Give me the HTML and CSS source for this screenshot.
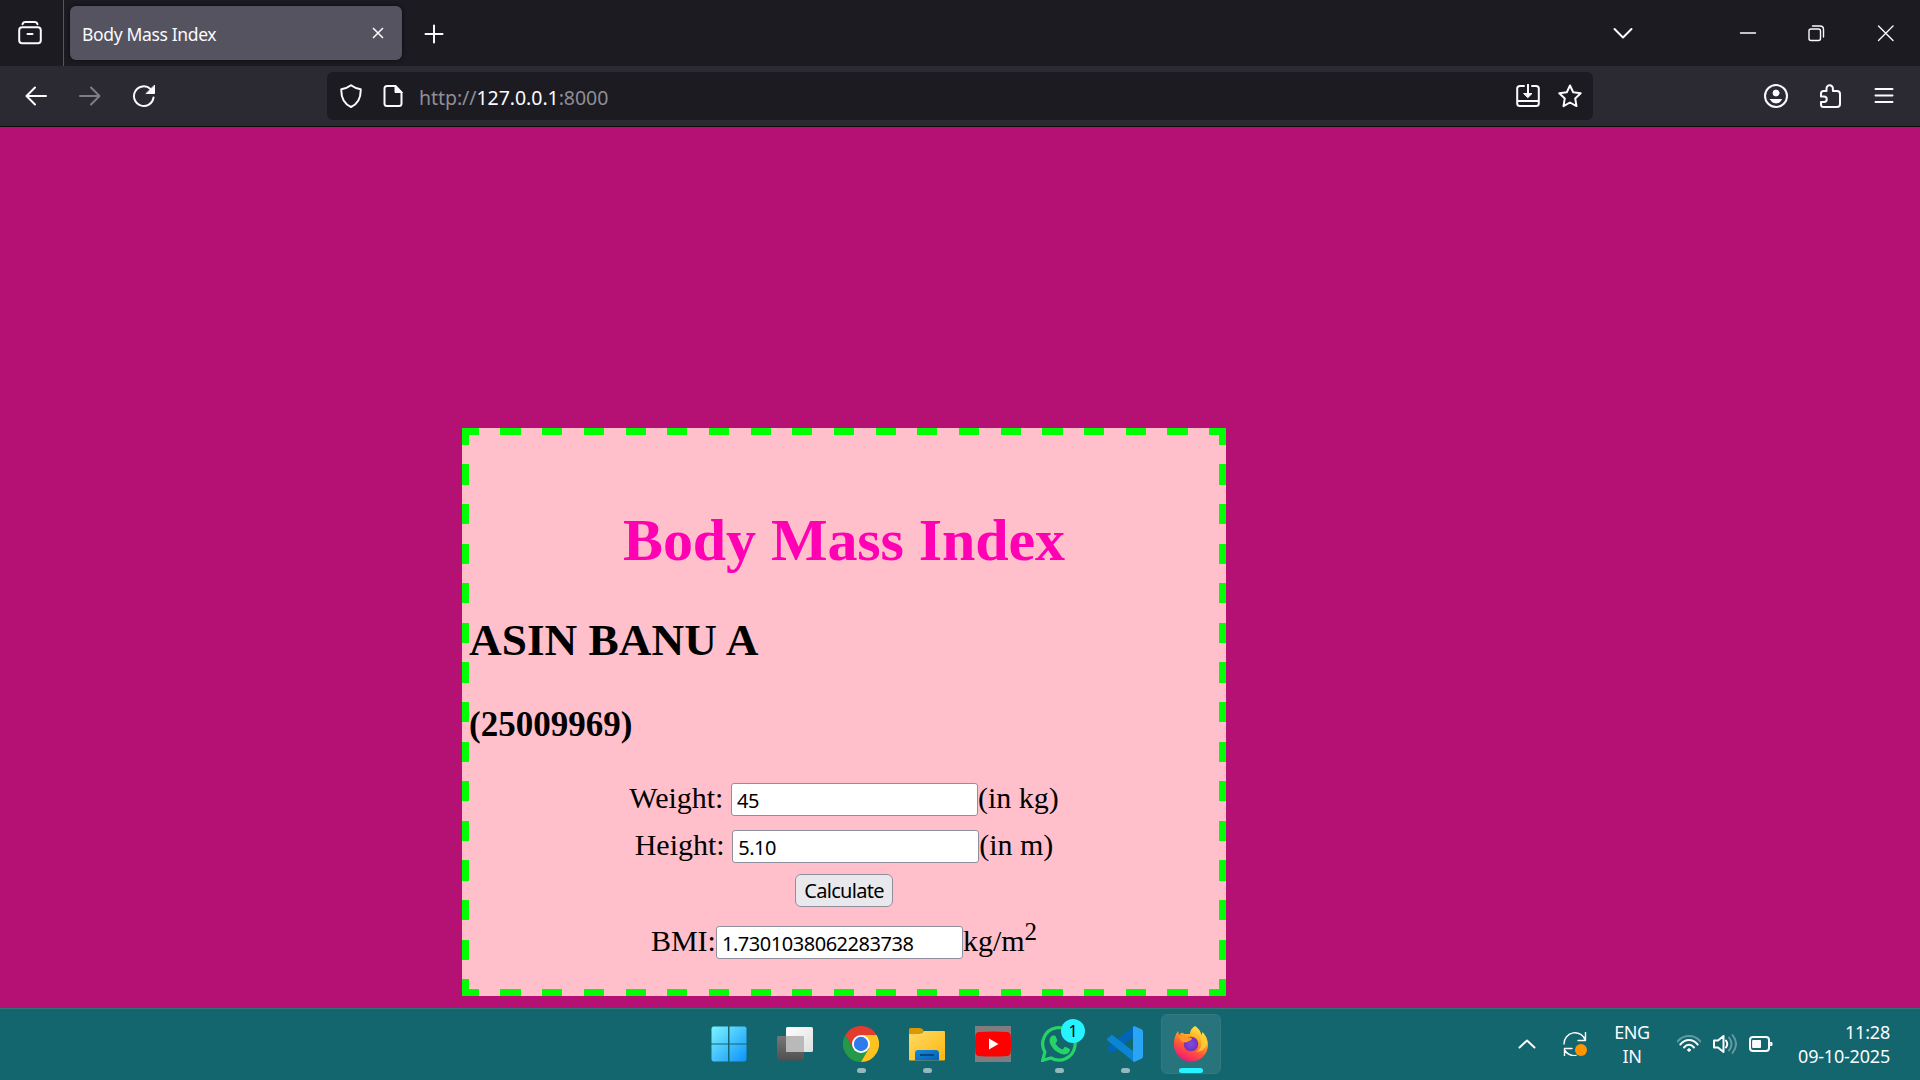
FILE: index.html
```html
<!DOCTYPE html>
<html lang="en">
<head>
<meta charset="utf-8">
<title>Body Mass Index</title>
<link rel="stylesheet" href="styles.css">
</head>
<body>
<header class="tabbar">
  <div class="tabview"><svg class="icon" viewBox="0 0 24 24"><rect x="1.2" y="6.2" width="21.6" height="16" rx="3"/><path d="M4.5 3.2Q5 1 7.5 1h9Q19 1 19.5 3.2"/><path d="M9.5 13h5"/></svg></div>
  <div class="tab"><span class="tab-title">Body Mass Index</span><svg class="tab-close" viewBox="0 0 12 12"><path d="M1 1l10 10M11 1L1 11"/></svg></div>
  <svg class="icon plus" viewBox="0 0 24 24"><path d="M12 3.500v17M3.500 12h17"/></svg>
  <div class="window-controls">
    <svg class="icon chevron" viewBox="0 0 24 24"><path d="M3.500 8l8.500 8.500L20.500 8"/></svg>
    <svg class="icon minimize thin" viewBox="0 0 24 24"><path d="M4.500 12h15"/></svg>
    <svg class="icon restore thin" viewBox="0 0 24 24"><rect x="5" y="8" width="11.500" height="11.500" rx="2"/><path d="M8.500 5H16q3.500 0 3.500 3.500V16"/></svg>
    <svg class="icon close thin" viewBox="0 0 24 24"><path d="M4.500 5l14.500 14.500M19 5L4.500 19.500"/></svg>
  </div>
</header>
<nav class="toolbar">
  <div class="nav-buttons">
    <svg class="icon" viewBox="0 0 24 24"><path d="M22 12H3M11 3.500L2.500 12l8.500 8.500"/></svg>
    <svg class="icon disabled" viewBox="0 0 24 24"><path d="M2 12h19M13 3.500l8.500 8.500-8.500 8.500"/></svg>
    <svg class="icon" viewBox="0 0 24 24"><path d="M21.500 13.500A9.800 9.800 0 1 1 18.500 5"/><path class="solid" d="M22.500 1.500v8h-8z"/></svg>
  </div>
  <div class="urlbar">
    <svg class="icon" viewBox="0 0 24 24"><path d="M12 1.200c3 2.300 6 3.400 9.700 4C22 14 19 20 12 23 5 20 2 14 2.300 5.200 6 4.600 9 3.500 12 1.200z"/></svg>
    <svg class="icon file" viewBox="0 0 24 24"><path d="M14.500 2H6Q3.500 2 3.500 4.500v15Q3.500 22 6 22h12q2.500 0 2.500-2.500V8.500z"/><path class="solid" d="M14 1.500v7h7z"/></svg>
    <span class="url">http://<b>127.0.0.1</b>:8000</span>
    <svg class="icon install" viewBox="0 0 24 24"><path d="M8 2H4Q1.200 2 1.200 4.500v15Q1.200 22 4 22h16q2.800 0 2.800-2.500v-15Q22.800 2 20 2h-4M1.200 17h21.600M12 0v12"/><path class="solid" d="M8 9.500h8l-4 4z"/></svg>
    <svg class="icon" viewBox="0 0 24 24"><path d="M12 1.500l3.200 6.700 7.500 1-5.500 5.200 1.300 7.700L12 18.500 5.500 22.100l1.300-7.700L1.300 9.200l7.500-1z"/></svg>
  </div>
  <div class="toolbar-actions">
    <svg class="icon" viewBox="0 0 24 24"><circle cx="12" cy="12" r="11"/><circle class="solid" cx="12" cy="9" r="3"/><path class="solid" d="M6.500 15.500h11Q16 19 12 19t-5.500-3.500z"/></svg>
    <svg class="icon" viewBox="0 0 24 24"><path d="M8.500 7V4.500a3.200 3.200 0 0 1 6.400 0V7H19q3 0 3 3v10q0 3-3 3H5.500Q3 23 3 20.500V18h3a2.700 2.700 0 0 0 0-5.500H3V9.500Q3 7 5.500 7z"/></svg>
    <svg class="icon" viewBox="0 0 24 24"><path d="M3.500 5h17M3.500 11.500h17M3.500 18h17"/></svg>
  </div>
</nav>
<main class="page">
  <form class="card">
    <h1>Body Mass Index</h1>
    <h2>ASIN BANU A</h2>
    <h3>(25009969)</h3>
    <div class="row weight"><span>Weight:&nbsp;</span><input type="text" value="45"><span>(in kg)</span></div>
    <div class="row height"><span>Height:&nbsp;</span><input type="text" value="5.10"><span>(in m)</span></div>
    <button type="button">Calculate</button>
    <div class="row bmi"><span>BMI:</span><input type="text" value="1.7301038062283738"><span>kg/m<sup>2</sup></span></div>
  </form>
</main>
<footer class="taskbar">
  <div class="apps">
    <div class="app start"><svg viewBox="0 0 36 36"><defs><linearGradient id="win" x1="0" y1="0" x2="36" y2="36" gradientUnits="userSpaceOnUse"><stop stop-color="#7df5ff"/><stop offset="1" stop-color="#0c91fb"/></linearGradient></defs><path fill="url(#win)" d="M2 .5h15v17H.5V2zM18.500.5H34L35.500 2v15.500h-17zM.5 18.500H17v17H2L.5 34zM18.500 18.500h17V34L34 35.500H18.500z"/></svg></div>
    <div class="app"><svg viewBox="0 0 36 36"><defs><linearGradient id="tvd" x1="0" y1="0" x2="0" y2="1"><stop stop-color="#777"/><stop offset="1" stop-color="#505050"/></linearGradient><linearGradient id="tvl" x1="0" y1="0" x2="1" y2="1"><stop stop-color="#fff"/><stop offset="1" stop-color="#dedede"/></linearGradient></defs><rect y="10" width="27" height="24.500" rx="1.500" fill="url(#tvd)"/><rect x="9" y="1" width="27" height="25" rx="1.500" fill="url(#tvl)"/><path d="M9 10h17q1 0 1 1v15H10q-1 0-1-1z" fill="#b9b9b9"/></svg></div>
    <div class="app"><svg viewBox="0 0 36 36"><path fill="#e33b2e" d="M2.400 9A18 18 0 0 1 33.600 9H18L10.200 22.500z"/><path fill="#249a48" d="M2.400 9A18 18 0 0 0 18 36l7.800-13.500H10.200z"/><path fill="#fcc31e" d="M33.600 9A18 18 0 0 1 18 36l7.800-13.500L18 9z"/><circle cx="18" cy="18" r="9" fill="#fff"/><circle cx="18" cy="18" r="7.200" fill="#2f7bec"/></svg><i class="running"></i></div>
    <div class="app"><svg viewBox="0 0 36 36"><defs><linearGradient id="fold" x1="0" y1="0" x2="1" y2="1"><stop stop-color="#ffda66"/><stop offset="1" stop-color="#fdb70e"/></linearGradient><linearGradient id="fblue" x1="0" y1="0" x2="1" y2="1"><stop stop-color="#168ad9"/><stop offset="1" stop-color="#0560b4"/></linearGradient></defs><path fill="#dc9800" d="M0 3.500Q0 2 1.500 2H11q2 0 4 3l-3 3H0z"/><path fill="url(#fold)" d="M0 8h11q2 0 4-3h20q1 0 1 1v27.500q0 1-1 1H1q-1 0-1-1z"/><path fill="url(#fblue)" d="M6 34.500V27q0-3 3-3h18q3 0 3 3v7.500z"/><path d="M11 29h14" stroke="#064681" stroke-width="2"/></svg><i class="running"></i></div>
    <div class="app"><svg viewBox="0 0 36 36"><path fill="#837b7d" d="M0 0h36v36H0z"/><path fill="red" d="M4 6q14-1 28 0 3.500.3 3.700 4 .6 8 0 16-.2 3.700-3.700 4-14 1-28 0-3.500-.3-3.700-4-.6-8 0-16Q.5 6.300 4 6z"/><path fill="#fff" d="M14 12.500v11l9.500-5.500z"/></svg></div>
    <div class="app"><svg viewBox="0 0 36 36"><path d="M1.700 34.300l2.200-8.300A16.200 16.200 0 1 1 10 32z" fill="none" stroke="#25d366" stroke-width="3.200"/><path fill="#25d366" d="M11.500 9.500h2q.8 0 1.200 1l1.500 3.600q.3.800-.3 1.500l-1.500 1.900q2.400 4.400 7 6.200l2-2.400q.6-.7 1.400-.3l3.600 1.800q.8.400.6 1.300-.9 4.600-6.500 4.300C15 27.500 8.700 20 8.500 14.500q0-3.500 3-5z"/></svg><i class="running"></i><span class="badge">1</span></div>
    <div class="app"><svg viewBox="0 0 36 36"><path fill="#0066b8" d="M27 0v10.500L5 27.300 1 24q-2-1.500 0-3.200z"/><path fill="#0b84d2" d="M5 8.700l22 17V36L1 15q-2-1.500 0-3.200z"/><path fill="#29a5f3" d="M27 0l7.500 3.300Q36 4 36 5.500v25q0 1.500-1.500 2.200L27 36l-1-1V1z"/></svg><i class="running"></i></div>
    <div class="app active"><svg viewBox="0 0 36 36"><defs><linearGradient id="ff" x1=".8" y1="0" x2=".3" y2="1"><stop stop-color="#fff44f"/><stop offset=".35" stop-color="#ffae24"/><stop offset=".65" stop-color="#ff5639"/><stop offset="1" stop-color="#f0147b"/></linearGradient><radialGradient id="globe"><stop stop-color="#7b4ee8"/><stop offset="1" stop-color="#7430b5"/></radialGradient></defs><path fill="url(#ff)" d="M22 0q5 3 6.500 9l1-3Q35 12 35 19a17 16.500 0 0 1-34 0Q.500 11 5 5l1 4 2-2q2-1 3 1h6q0-5 5-8z"/><circle cx="18" cy="18" r="7.300" fill="url(#globe)"/><path fill="#ff9826" d="M5 11q5-3 9 0l5 1q0 2-4 3.500-3 2-6 0z"/><path fill="#ffd23b" d="M21 1q6 4 7 12 2 9-5 13 9-1 11-8 1-6-4-11l-1 4q-2-7-8-10z" opacity=".75"/></svg><i class="running"></i></div>
  </div>
  <div class="tray">
    <svg class="icon tray-chevron" viewBox="0 0 24 24"><path d="M4.500 15.500l7.500-7 7.500 7"/></svg>
    <svg class="icon sync thin" viewBox="0 0 24 24"><path d="M1 12A11 11 0 0 1 22.500 8.500M22.500 0v8.500H15M13 23.500Q6 24.500 1.500 18M1.500 24v-7.500H9"/><circle cx="18" cy="18" r="6" fill="#ff9500" stroke="none"/></svg>
    <div class="lang"><span>ENG</span><span>IN</span></div>
    <svg class="icon wifi" viewBox="0 0 24 24"><path class="faint" d="M.5 9.500Q5 4 12 4t11.500 5.500"/><path d="M3.300 12.500Q7 8 12 8t8.700 4.500M7 15.500q2.200-2.700 5-2.700t5 2.700"/><circle class="solid" cx="12" cy="18" r="1.300"/></svg>
    <svg class="icon sound" viewBox="0 0 24 24"><path d="M1 8.500h4L10.500 4v16L5 15.500H1zM13 8.500q2.500 3.500 0 7"/><path class="faint" d="M16 5.500q5 6.500 0 13M19.500 3q7 9 0 18"/></svg>
    <svg class="icon battery" viewBox="0 0 24 24"><rect x="1" y="5" width="19" height="14" rx="3"/><path class="solid" d="M4 8.500h7.500v7H4zM21.500 10.500h1.500v3h-1.500z"/></svg>
    <div class="clock"><span>11:28</span><span>09-10-2025</span></div>
  </div>
</footer>
</body>
</html>
```
FILE: styles.css
```css
* { box-sizing: border-box; }
body {
  margin: 0;
  width: 1920px;
  height: 1080px;
  overflow: hidden;
  display: flex;
  flex-direction: column;
  font-family: "Noto Sans", "Open Sans", sans-serif;
  color: #fbfbfe;
}
svg { display: block; flex: none; }
.icon {
  width: 24px;
  height: 24px;
  fill: none;
  stroke: #fbfbfe;
  stroke-width: 2;
  stroke-linecap: round;
  stroke-linejoin: round;
}
.thin { stroke-width: 1.4; }
.solid { fill: #fbfbfe; stroke-width: 1; }
.faint { opacity: .35; }
.disabled { opacity: .4; }

.tabbar {
  height: 66px;
  flex: none;
  display: flex;
  align-items: center;
  background: #1c1b22;
}
.tabview {
  width: 64px;
  height: 66px;
  padding: 21px 0 0 18px;
  border-right: 1px solid #55535e;
}
.tab {
  width: 332px;
  height: 54px;
  margin-left: 6px;
  padding: 0 18px 0 12px;
  display: flex;
  align-items: center;
  justify-content: space-between;
  border-radius: 6px;
  background: #55535f;
  box-shadow: 0 0 4px #0c0c10;
}
.tab-title { padding-top: 1px; font-size: 17.500px; letter-spacing: -.35px; }
.tab-close { width: 12px; height: 12px; stroke: #fbfbfe; stroke-width: 1.500; }
.plus { margin: 2px 0 0 20px; }
.window-controls { margin-left: auto; padding-right: 22px; display: flex; }
.minimize { margin-left: 101px; }
.restore { margin-left: 44px; }
.close { margin-left: 46px; }

.toolbar {
  height: 61px;
  flex: none;
  display: flex;
  align-items: center;
  padding: 0 24px;
  background: #2b2a33;
  border-bottom: 1px solid #0c0c0d;
}
.nav-buttons { width: 303px; display: flex; gap: 30px; }
.urlbar {
  width: 1266px;
  height: 48px;
  padding: 0 11px 0 12px;
  display: flex;
  align-items: center;
  border-radius: 6px;
  background: #1c1b22;
}
.file { margin-left: 18px; }
.url { margin-left: 14px; padding-top: 2px; font-size: 19.500px; letter-spacing: -.05px; color: #8f8e95; }
.url b { font-weight: 400; color: #fbfbfe; }
.install { margin: 0 18px 0 auto; }
.toolbar-actions { margin-left: auto; display: flex; gap: 30px; }

.page { height: 881px; flex: none; padding: 301px 0 0 462px; background: #b51074; }
.card {
  width: 764px;
  height: 568px;
  padding: 7px;
  display: flex;
  flex-direction: column;
  align-items: center;
  color: #000;
  font-family: "Liberation Serif", serif;
  font-size: 30px;
  background:
    repeating-linear-gradient(90deg, #0f0 -3.200px 17px, pink 17px 38.480px) top / 100% 7px no-repeat,
    repeating-linear-gradient(90deg, #0f0 -3.200px 17px, pink 17px 38.480px) bottom / 100% 7px no-repeat,
    repeating-linear-gradient(#0f0 -3.200px 17px, pink 17px 36.400px) left / 7px 100% no-repeat,
    repeating-linear-gradient(#0f0 -3.200px 17px, pink 17px 36.400px) right / 7px 100% no-repeat,
    pink;
}
h1, h2, h3 { margin: 0; white-space: nowrap; }
h1 { margin-top: 70px; font-size: 60px; line-height: 70px; letter-spacing: -.1px; color: #ff00b3; }
h2 { align-self: flex-start; margin-top: 37px; font-size: 45.300px; line-height: 56px; }
h3 { align-self: flex-start; margin-top: 36px; font-size: 35px; line-height: 42px; }
.row { height: 33px; display: flex; align-items: center; white-space: nowrap; line-height: 33px; }
.row span { height: 37px; }
.weight { margin-top: 37px; }
.height { margin-top: 14px; }
.bmi { margin-top: 19px; }
input {
  width: 247px;
  height: 33px;
  margin: 0;
  padding: 2px 5px 0;
  border: 1px solid #8f8f9d;
  border-radius: 3px;
  background: #fff;
  color: #000;
  font-family: "Noto Sans", sans-serif;
  font-size: 20px;
  letter-spacing: -.460px;
}
button {
  width: 98px;
  height: 33px;
  margin: 11px 0 0;
  padding: 0;
  border: 1px solid #8f8f9d;
  border-radius: 6px;
  background: #e9e9ed;
  color: #000;
  font-family: "Noto Sans", sans-serif;
  font-size: 20px;
  line-height: 30px;
  letter-spacing: -.7px;
}
sup { font-size: 25px; line-height: 0; }

.taskbar {
  height: 72px;
  flex: none;
  display: flex;
  justify-content: space-between;
  padding: 0 30px 2px 699px;
  background: #13656e;
  border-top: 1px solid #2f7477;
}
.apps { display: flex; align-items: center; gap: 6px; }
.app {
  position: relative;
  width: 60px;
  height: 60px;
  display: flex;
  align-items: center;
  justify-content: center;
  border-radius: 6px;
}
.app svg { width: 36px; height: 36px; }
.active { background: #28747c; border: 1px solid #34797f; }
.running {
  position: absolute;
  left: 26px;
  bottom: 1px;
  width: 9px;
  height: 5px;
  border-radius: 3px;
  background: #94b8bd;
}
.active .running { left: 17px; bottom: 0; width: 24px; background: #25f3ff; }
.badge {
  position: absolute;
  left: 32px;
  top: 5px;
  width: 24px;
  height: 24px;
  border-radius: 50%;
  background: #25f3ff;
  color: #000;
  font-size: 16px;
  line-height: 24px;
  text-align: center;
}
.tray { display: flex; align-items: center; font-size: 18px; line-height: 24px; letter-spacing: -.2px; }
.lang, .clock { display: flex; flex-direction: column; }
.sync { margin-left: 24px; }
.lang { width: 60px; margin-left: 15px; align-items: center; letter-spacing: -.5px; }
.wifi { margin-left: 15px; }
.sound, .battery { margin-left: 12px; }
.clock { width: 117px; align-items: flex-end; }
```
